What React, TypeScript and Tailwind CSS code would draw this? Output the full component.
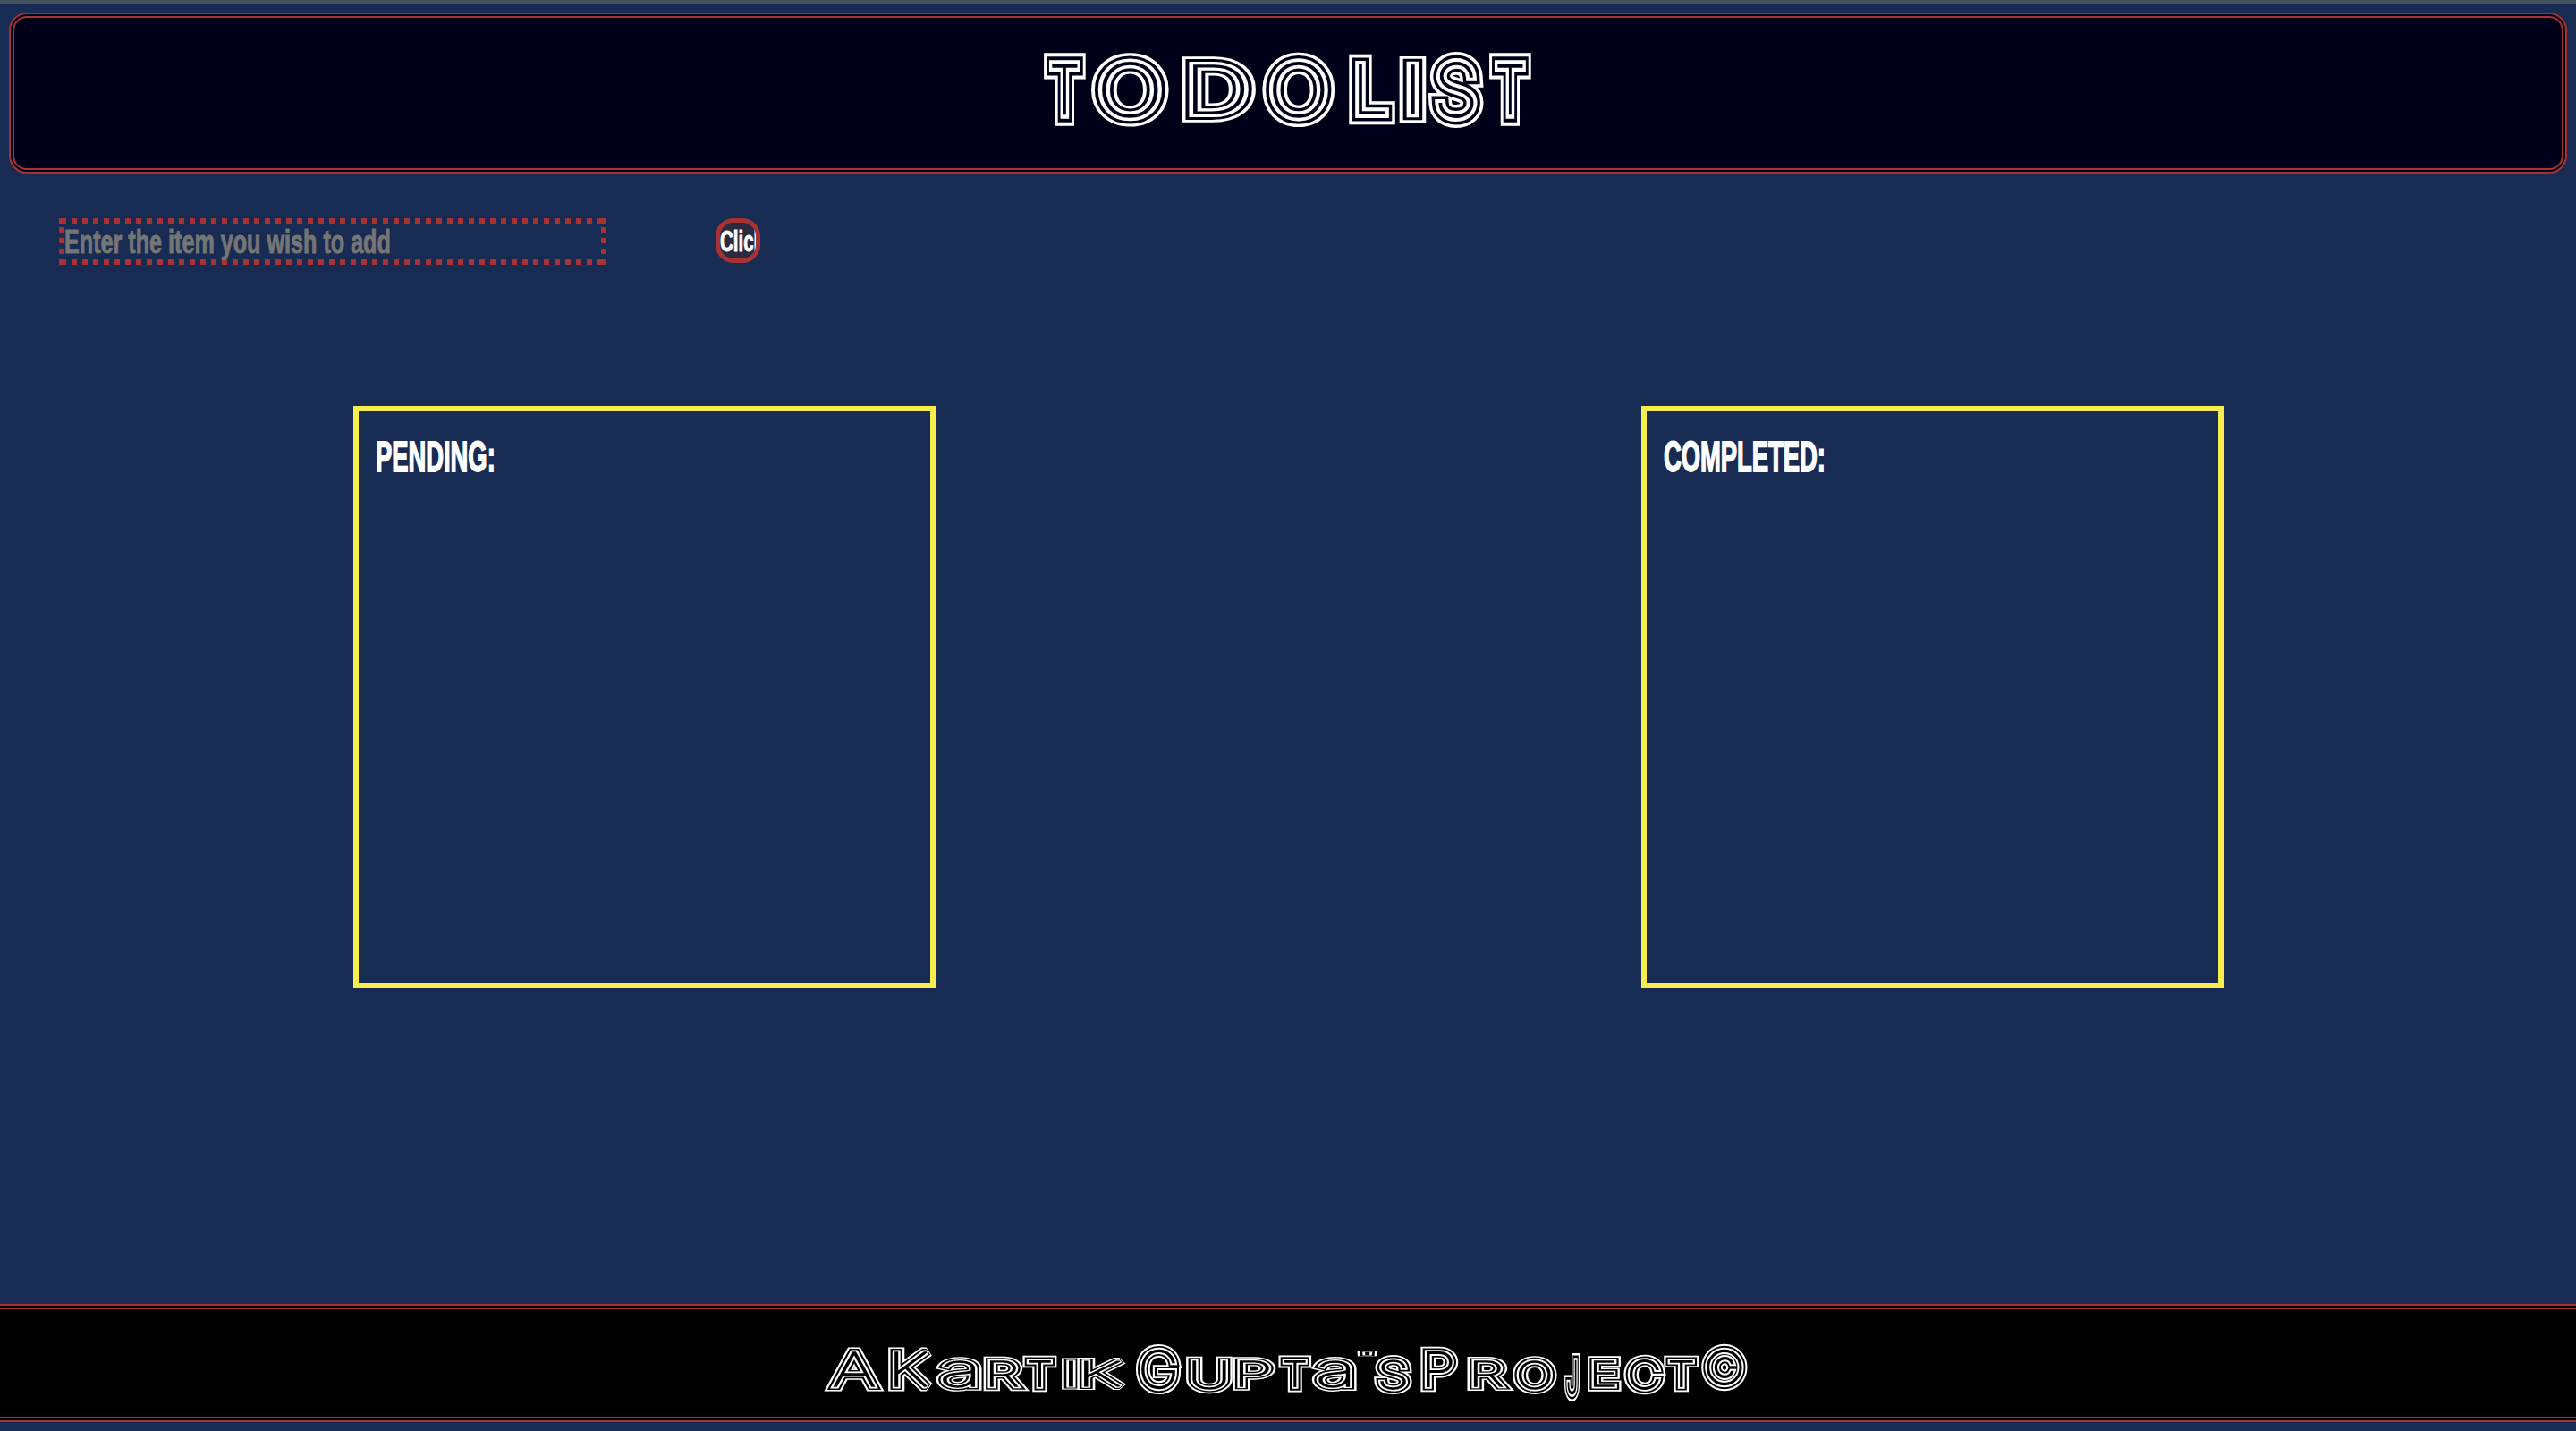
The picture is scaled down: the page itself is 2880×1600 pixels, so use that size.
import { useId } from "react";

type Glyph = { c: string; x0: number; x1: number; top: number; bottom: number; keep?: boolean };

const title: Glyph[] = [
  { c: "T", x0: 1165, x1: 1216, top: 61, bottom: 139 },
  { c: "O", x0: 1221, x1: 1306, top: 58, bottom: 143 },
  { c: "D", x0: 1323, x1: 1403, top: 61, bottom: 139 },
  { c: "O", x0: 1412, x1: 1492, top: 58, bottom: 143 },
  { c: "L", x0: 1508, x1: 1560, top: 61, bottom: 139 },
  { c: "I", x0: 1566, x1: 1590, top: 61, bottom: 139 },
  { c: "S", x0: 1597, x1: 1659, top: 58, bottom: 143 },
  { c: "T", x0: 1663, x1: 1714, top: 61, bottom: 139 },
];

const footer: Glyph[] = [
  { c: "A", x0: 926, x1: 984, top: 1505, bottom: 1557 },
  { c: "K", x0: 994, x1: 1043, top: 1505, bottom: 1557 },
  { c: "a", x0: 1048, x1: 1096, top: 1515, bottom: 1558, keep: true },
  { c: "r", x0: 1101, x1: 1144, top: 1515, bottom: 1557 },
  { c: "t", x0: 1144, x1: 1181, top: 1515, bottom: 1557 },
  { c: "i", x0: 1189, x1: 1203, top: 1515, bottom: 1557 },
  { c: "k", x0: 1206, x1: 1259, top: 1515, bottom: 1557 },
  { c: "G", x0: 1270, x1: 1320, top: 1503, bottom: 1560 },
  { c: "u", x0: 1327, x1: 1377, top: 1515, bottom: 1560 },
  { c: "p", x0: 1380, x1: 1425, top: 1515, bottom: 1557 },
  { c: "t", x0: 1430, x1: 1466, top: 1515, bottom: 1557 },
  { c: "a", x0: 1468, x1: 1515, top: 1515, bottom: 1558, keep: true },
  { c: "'", x0: 1520, x1: 1532, top: 1505, bottom: 1522 },
  { c: "s", x0: 1537, x1: 1578, top: 1513, bottom: 1560 },
  { c: "P", x0: 1589, x1: 1630, top: 1505, bottom: 1557 },
  { c: "r", x0: 1642, x1: 1686, top: 1515, bottom: 1557 },
  { c: "o", x0: 1692, x1: 1740, top: 1515, bottom: 1560 },
  { c: "j", x0: 1746, x1: 1769, top: 1515, bottom: 1565 },
  { c: "e", x0: 1776, x1: 1812, top: 1515, bottom: 1557 },
  { c: "c", x0: 1816, x1: 1861, top: 1513, bottom: 1560 },
  { c: "t", x0: 1861, x1: 1899, top: 1515, bottom: 1557 },
  { c: "©", x0: 1902, x1: 1954, top: 1503, bottom: 1556, keep: true },
];

const ctx = document.createElement("canvas").getContext("2d")!;

// ink box of a glyph at 100px, so it can be fitted to the target box
function ink(c: string) {
  ctx.font = "100 100px Inter";
  const m = ctx.measureText(c);
  return { l: -m.actualBoundingBoxLeft, r: m.actualBoundingBoxRight, up: m.actualBoundingBoxAscent, down: m.actualBoundingBoxDescent };
}

// concentric lines: same glyph stroked at shrinking widths, last layer on top
function Stripe({ g, bands, ground }: { g: Glyph; bands: number[]; ground: string }) {
  const id = useId();
  const sw = bands[0];
  const box = ink(g.keep ? g.c : g.c.toUpperCase());
  const sx = Math.max(g.x1 - g.x0 - sw, 3) / (box.r - box.l);
  const sy = Math.max(g.bottom - g.top - sw, 1) / (box.up + box.down);
  const tx = g.x0 + sw / 2 - box.l * sx;
  const ty = g.top + sw / 2 + box.up * sy;
  return (
    <g transform={`translate(${tx} ${ty}) scale(${sx} ${sy})`}>
      <defs>
        <text
          id={id}
          fontSize={100}
          fontWeight={100}
          className={g.keep ? "[font-family:Inter,sans-serif]" : "uppercase [font-family:Inter,sans-serif]"}
          vectorEffect="non-scaling-stroke"
          strokeLinejoin="miter"
          strokeMiterlimit={2}
        >
          {g.c}
        </text>
      </defs>
      {bands.map((width, i) => {
        const color = i % 2 === 0 ? "#fff" : ground;
        return <use key={i} href={`#${id}`} fill={color} stroke={color} strokeWidth={width} vectorEffect="non-scaling-stroke" />;
      })}
    </g>
  );
}

export default function App() {
  return (
    <div className="flex min-h-[1600px] flex-col border-t-4 border-t-[#44545c] bg-[#172b53] [font-family:'Liberation_Sans',sans-serif]">
      <header className="mx-[10px] mt-[10px] h-[180px] rounded-[20px] border-[6px] border-double border-[#a83232] bg-[#000018]">
        <svg viewBox="10 14 2860 180" className="-m-[6px] block h-[180px] w-[2860px] transform-gpu">
          {title.map((g, i) => (
            <Stripe key={i} g={g} bands={[24, 17, 10, 2]} ground="#000018" />
          ))}
        </svg>
      </header>

      <div className="mt-[50px] flex items-start pl-[66px]">
        <div className="h-[52px] w-[612px] overflow-hidden px-[6px] py-[7px] [background:linear-gradient(#a83232,#a83232)_0_0/8px_6px_no-repeat,linear-gradient(#a83232,#a83232)_100%_0/8px_6px_no-repeat,linear-gradient(#a83232,#a83232)_0_100%/8px_6px_no-repeat,linear-gradient(#a83232,#a83232)_100%_100%/8px_6px_no-repeat,repeating-linear-gradient(90deg,transparent_0_2px,#a83232_2px_8px,transparent_8px_12px)_0_0/100%_6px_no-repeat,repeating-linear-gradient(90deg,transparent_0_2px,#a83232_2px_8px,transparent_8px_12px)_0_100%/100%_6px_no-repeat,repeating-linear-gradient(180deg,#a83232_0_6px,transparent_6px_12px)_0_10px/6px_30px_no-repeat,repeating-linear-gradient(180deg,#a83232_0_6px,transparent_6px_12px)_100%_10px/6px_30px_no-repeat]">
          <input
            placeholder="Enter the item you wish to add"
            className="block h-[40px] w-[882px] origin-left scale-x-[0.68] bg-transparent text-[37px] font-bold text-white outline-none [-webkit-text-stroke:1px] placeholder:text-[#757575]"
          />
        </div>
        <button className="ml-[122px] h-[50px] w-[50px] overflow-hidden rounded-[20px] border-[5px] border-[#a83232] bg-[#2a2a40] text-left text-[33px] leading-none font-bold whitespace-nowrap text-white [-webkit-text-stroke:1px]">
          <span className="inline-block origin-left scale-x-[0.62]">Click</span>
        </button>
      </div>

      <main className="mt-[158px] grid grid-cols-2 justify-items-center">
        {["PENDING:", "COMPLETED:"].map((label) => (
          <section key={label} className="h-[651px] w-[651px] overflow-hidden border-[6px] border-[#f9ec4f] px-[19px] py-[27px]">
            <h2 className="origin-left scale-x-[0.57] text-[48px] leading-[48px] font-bold whitespace-nowrap text-white [-webkit-text-stroke:1.8px]">
              {label}
            </h2>
          </section>
        ))}
      </main>

      <footer className="mt-auto mb-[10px] h-[132px] border-y-[6px] border-double border-[#a83232] bg-black">
        <svg viewBox="0 1458 2880 132" className="-mt-[6px] block h-[132px] w-[2880px] transform-gpu">
          {footer.map((g, i) => (
            <Stripe key={i} g={g} bands={[14, 10, 6, 2]} ground="#000" />
          ))}
        </svg>
      </footer>
    </div>
  );
}
